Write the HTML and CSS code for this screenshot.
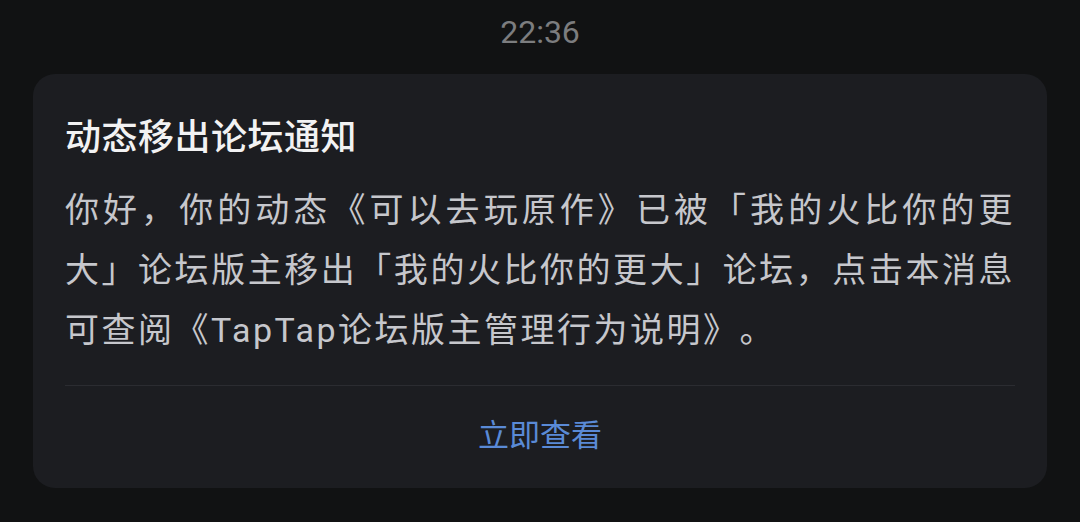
FILE: index.html
```html
<!DOCTYPE html>
<html lang="zh-CN">
<head>
    <meta charset="UTF-8">
    <title>动态移出论坛通知</title>
    <link rel="stylesheet" href="styles.css">
</head>
<body>
    <div class="time">22:36</div>

    <div class="notice-card">
        <h1 class="notice-title">动态移出论坛通知</h1>
        <p class="notice-body">你好，你的动态《可以去玩原作》已被「我的火比你的更大」论坛版主移出「我的火比你的更大」论坛，点击本消息可查阅《TapTap论坛版主管理行为说明》。</p>
        <div class="notice-action">
            <a class="action-link" href="#">立即查看</a>
        </div>
    </div>
</body>
</html>
```

FILE: styles.css
```css
body {
    font-family: "Noto Sans CJK SC", "Noto Sans", Roboto, sans-serif;
    margin: 0;
    padding: 0 33px;
    background: #111213;
    color: #c6c7cc;
    height: 522px;
    overflow: hidden;
}

.time {
    font-family: Roboto, "Noto Sans", sans-serif;
    font-size: 32px;
    color: #7c7d7f;
    text-align: center;
    height: 74px;
    line-height: 64px;
}

.notice-card {
    background: #1c1d21;
    border-radius: 22px;
    padding: 36px 32px 0;
}

.notice-title {
    margin: 0;
    font-size: 36px;
    font-weight: 500;
    line-height: 48px;
    color: #f2f2f3;
    letter-spacing: 0.5px;
}

.notice-body {
    margin: 22px 0 0;
    font-family: Roboto, "Noto Sans CJK SC", sans-serif;
    font-size: 34px;
    line-height: 60px;
    letter-spacing: 2.5px;
    text-align: justify;
    text-spacing-trim: space-all;
    padding-bottom: 25px;
    border-bottom: 1px solid #2b2c31;
}

.notice-action {
    height: 102px;
    display: flex;
    align-items: center;
    justify-content: center;
}

.action-link {
    font-size: 31px;
    color: #5a8ad6;
    text-decoration: none;
    margin-top: -9px;
}
```
